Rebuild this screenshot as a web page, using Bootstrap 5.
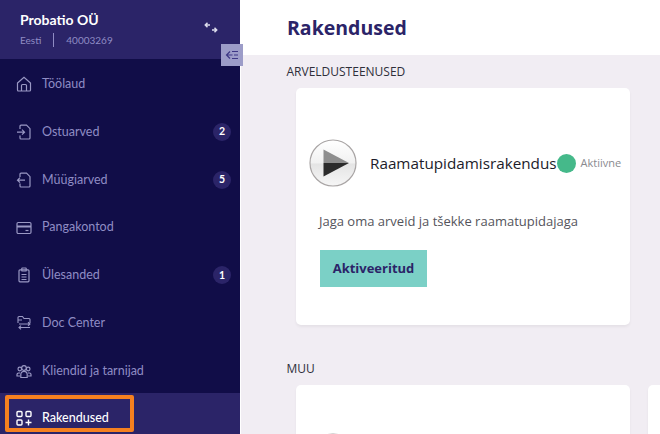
<!DOCTYPE html>
<html lang="et">
<head>
    <meta charset="UTF-8">
    <meta name="viewport" content="width=device-width, initial-scale=1">
    <title>Rakendused</title>
    <link href="https://cdn.jsdelivr.net/npm/bootstrap@5.3.0/dist/css/bootstrap.min.css" rel="stylesheet">
    <style>
        html, body { height: 434px; overflow: hidden; }
        body { font-family: "Open Sans", "Noto Sans", sans-serif; background: #f1edf3; color: #222; }

        .app-shell { height: 434px; }
        .side-bar { width: 241px; flex: none; background: #110d48; border-right: 1px solid #fff; position: relative; font-family: Lato, "Noto Sans", sans-serif; }
        .side-head { height: 59px; background: #2b2468; padding: 11px 20px 0; color: #fff; }
        .org-name { font-size: 14px; font-weight: 700; line-height: 18px; }
        .org-meta { font-size: 10px; line-height: 14px; color: #8f8cc4; margin-top: 4px; }
        .org-meta i { display: block; width: 1px; height: 14px; background: #8f8cc4; margin: 0 12px; }
        .swap-ico { position: absolute; left: 204px; top: 21px; }
        .collapse-btn { position: absolute; left: 221px; top: 44px; width: 22px; height: 22px; background: #9c9cc8; z-index: 2; }

        .side-link { height: 47.75px; padding: 3px 9px 0 16px; color: #8f8cc4; font-size: 12.5px; text-decoration: none; }
        .side-link svg { flex: none; margin-right: 10px; }
        .side-count { width: 18px; height: 18px; border-radius: 50%; background: #2b2468; color: #fff; font-size: 10.5px; font-weight: 700; }
        .side-active { height: 41px; padding-top: 9px; background: #2b2468; color: #fff; font-weight: 500; position: relative; }
        .side-mark { position: absolute; left: 5px; top: 2px; width: 129px; height: 37px; border: 4px solid #f5801f; border-radius: 2px; }

        .main-area { min-width: 0; }
        .top-title { height: 55px; background: #fff; padding-left: 46px; }
        .top-title h1 { font-size: 19.5px; font-weight: 700; color: #2b2468; margin: 0; }
        .main-body { padding: 9px 0 0 46px; }
        .group-label { font-size: 12px; line-height: 16px; color: #2f2f3a; margin: 0 0 0 -0.5px; }
        .app-row { gap: 18px; margin-left: 9px; }
        .app-tile { width: 334px; flex: none; height: 237px; background: #fff; border: 0; border-radius: 5px; box-shadow: 0 2px 3px rgba(0,0,0,.05); }
        .tile-head { padding: 50px 0 0 13px; height: 100px; }
        .app-name { font-size: 15.25px; margin-left: 13px; color: #1c1c2a; }
        .status-dot { width: 19px; height: 19px; border-radius: 50%; background: #45b98a; flex: none; }
        .status-text { font-size: 11px; color: #8a8a8f; margin-left: 5px; }
        .tile-desc { font-size: 13px; color: #54545c; margin: 23px 0 0 23px; line-height: 20px; }
        .active-btn { margin: 19px 0 0 24px; width: 107px; height: 37px; background: #7bd0c6; color: #2b2468; font-size: 13px; font-weight: 700; border: 0; border-radius: 0; padding: 0; }
        .second-group { margin-top: 36px; }
        .second-group .app-tile { margin-top: 8px; }
        .tile-peek { padding-top: 48px; padding-left: 13px; }
    </style>
</head>
<body>

<div class="app-shell d-flex overflow-hidden">
    <aside class="side-bar">
        <div class="side-head">
            <div class="org-name">Probatio OÜ</div>
            <div class="org-meta d-flex align-items-center"><span>Eesti</span><i></i><span>40003269</span></div>
        </div>
        <svg class="swap-ico" width="14" height="13" viewBox="0 0 14 13" fill="none" stroke="#dcdcec" stroke-width="1.5">
            <path d="M1.5 4h4.500M3.500 1.800L1.300 4l2.200 2.200M12.500 9H8M10.500 6.800L12.700 9l-2.200 2.200"/>
        </svg>
        <div class="collapse-btn d-flex align-items-center justify-content-center">
            <svg width="14" height="12" viewBox="0 0 14 12" fill="none" stroke="#3d3785" stroke-width="1.2">
                <path d="M5 2.500L1.500 6 5 9.500M1.500 6h6M7 2.500h6M9 6h4M7 9.500h6"/>
            </svg>
        </div>

        <nav class="nav flex-column">
            <a class="side-link d-flex align-items-center" href="#">
                <svg width="16" height="16" viewBox="0 0 16 16" fill="none" stroke="#9a98c4" stroke-width="1.2"><path d="M1.500 7L8 1.200 14.500 7v7a1 1 0 0 1-1 1h-11a1 1 0 0 1-1-1z"/><path d="M5.500 15V9.500a1 1 0 0 1 1-1h3a1 1 0 0 1 1 1V15"/></svg>
                <span>Töölaud</span>
            </a>
            <a class="side-link d-flex align-items-center" href="#">
                <svg width="16" height="16" viewBox="0 0 16 16" fill="none" stroke="#9a98c4" stroke-width="1.2"><path d="M4 5V2.200a1 1 0 0 1 1-1h5.500L14 4.700V14a1 1 0 0 1-1 1H5a1 1 0 0 1-1-1v-2.500"/><path d="M1 8.200h7.500M6 5.700l2.500 2.500L6 10.700"/></svg>
                <span class="flex-grow-1">Ostuarved</span>
                <span class="side-count d-flex align-items-center justify-content-center">2</span>
            </a>
            <a class="side-link d-flex align-items-center" href="#">
                <svg width="16" height="16" viewBox="0 0 16 16" fill="none" stroke="#9a98c4" stroke-width="1.2"><path d="M4 5V2.200a1 1 0 0 1 1-1h5.500L14 4.700V14a1 1 0 0 1-1 1H5a1 1 0 0 1-1-1v-2.500"/><path d="M9 8.200H1.500M4 5.700L1.500 8.200 4 10.700"/></svg>
                <span class="flex-grow-1">Müügiarved</span>
                <span class="side-count d-flex align-items-center justify-content-center">5</span>
            </a>
            <a class="side-link d-flex align-items-center" href="#">
                <svg width="16" height="16" viewBox="0 0 16 16" fill="none" stroke="#9a98c4" stroke-width="1.2"><rect x="1" y="2.500" width="14" height="11" rx="1.200"/><path d="M1 6.500h14" stroke-width="2"/><path d="M9.500 10.500h3"/></svg>
                <span>Pangakontod</span>
            </a>
            <a class="side-link d-flex align-items-center" href="#">
                <svg width="16" height="16" viewBox="0 0 16 16" fill="none" stroke="#9a98c4" stroke-width="1.2"><rect x="3" y="2.800" width="10" height="12" rx="1"/><rect x="5.800" y="1" width="4.400" height="3" rx=".6"/><path d="M5.500 7.500h5M5.500 10h5M5.500 12.500h5"/></svg>
                <span class="flex-grow-1">Ülesanded</span>
                <span class="side-count d-flex align-items-center justify-content-center">1</span>
            </a>
            <a class="side-link d-flex align-items-center" href="#">
                <svg width="16" height="16" viewBox="0 0 16 16" fill="none" stroke="#9a98c4" stroke-width="1.1"><path d="M2 8V2.500a1 1 0 0 1 1-1h3.500l1.500 2h5a1 1 0 0 1 1 1V8"/><path d="M2 5h4M3 9h11M12 7.200L14 9l-2 1.800M14 12.500H3M5 10.700l-2 1.800 2 1.800"/></svg>
                <span>Doc Center</span>
            </a>
            <a class="side-link d-flex align-items-center" href="#">
                <svg width="16" height="16" viewBox="0 0 16 16" fill="none" stroke="#9a98c4" stroke-width="1.2"><circle cx="8" cy="5" r="2.300"/><circle cx="3.800" cy="6" r="1.800"/><circle cx="12.200" cy="6" r="1.800"/><path d="M4.800 14.500v-3a3.200 3.200 0 0 1 6.400 0v3zM4 10H2.600A1.600 1.600 0 0 0 1 11.600V13h3M12 10h1.400a1.600 1.600 0 0 1 1.600 1.600V13h-3"/></svg>
                <span>Kliendid ja tarnijad</span>
            </a>
            <a class="side-link side-active d-flex align-items-center" href="#">
                <svg width="16" height="16" viewBox="0 0 16 16" fill="none" stroke="#fff" stroke-width="1.4"><rect x="1" y="1.500" width="5" height="5" rx="1"/><rect x="10" y="1.500" width="5" height="5" rx="1"/><rect x="1" y="10" width="5" height="5" rx="1"/><path d="M12.500 9.500v6M9.500 12.500h6"/></svg>
                <span>Rakendused</span>
                <span class="side-mark"></span>
            </a>
        </nav>
    </aside>

    <main class="main-area flex-grow-1 overflow-hidden">
        <div class="top-title d-flex align-items-center">
            <h1>Rakendused</h1>
        </div>
        <div class="main-body">
            <p class="group-label mb-2">ARVELDUSTEENUSED</p>
            <div class="app-row d-flex">
                <div class="card app-tile">
                    <div class="tile-head d-flex align-items-center">
                        <svg width="48" height="48" viewBox="0 0 48 48">
                            <defs><linearGradient id="discFill" x1="0" y1="0" x2="0" y2="1"><stop offset="0" stop-color="#fff"/><stop offset=".5" stop-color="#f1f1f1"/><stop offset=".52" stop-color="#e4e4e4"/><stop offset="1" stop-color="#f6f6f6"/></linearGradient></defs>
                            <circle cx="24" cy="24" r="23" fill="url(#discFill)" stroke="#a9a5a5" stroke-width="1.2"/>
                            <path d="M14.500 10.500L40 24H14.500z" fill="#8e8e8e"/>
                            <path d="M14.500 24H40L14.500 37.500z" fill="#2b2b2b"/>
                        </svg>
                        <span class="app-name">Raamatupidamisrakendus</span>
                        <span class="status-dot"></span>
                        <span class="status-text">Aktiivne</span>
                    </div>
                    <p class="tile-desc">Jaga oma arveid ja tšekke raamatupidajaga</p>
                    <button class="btn active-btn" type="button">Aktiveeritud</button>
                </div>
            </div>

            <div class="second-group">
                <p class="group-label mb-0">MUU</p>
                <div class="app-row d-flex">
                    <div class="card app-tile tile-peek">
                        <svg width="48" height="48" viewBox="0 0 48 48">
                            <circle cx="24" cy="24" r="23" fill="#f1f1f1" stroke="#a9a5a5" stroke-width="1.2"/>
                        </svg>
                    </div>
                    <div class="card app-tile"></div>
                </div>
            </div>
        </div>
    </main>
</div>

<script src="https://cdn.jsdelivr.net/npm/bootstrap@5.3.0/dist/js/bootstrap.bundle.min.js"></script>
</body>
</html>
